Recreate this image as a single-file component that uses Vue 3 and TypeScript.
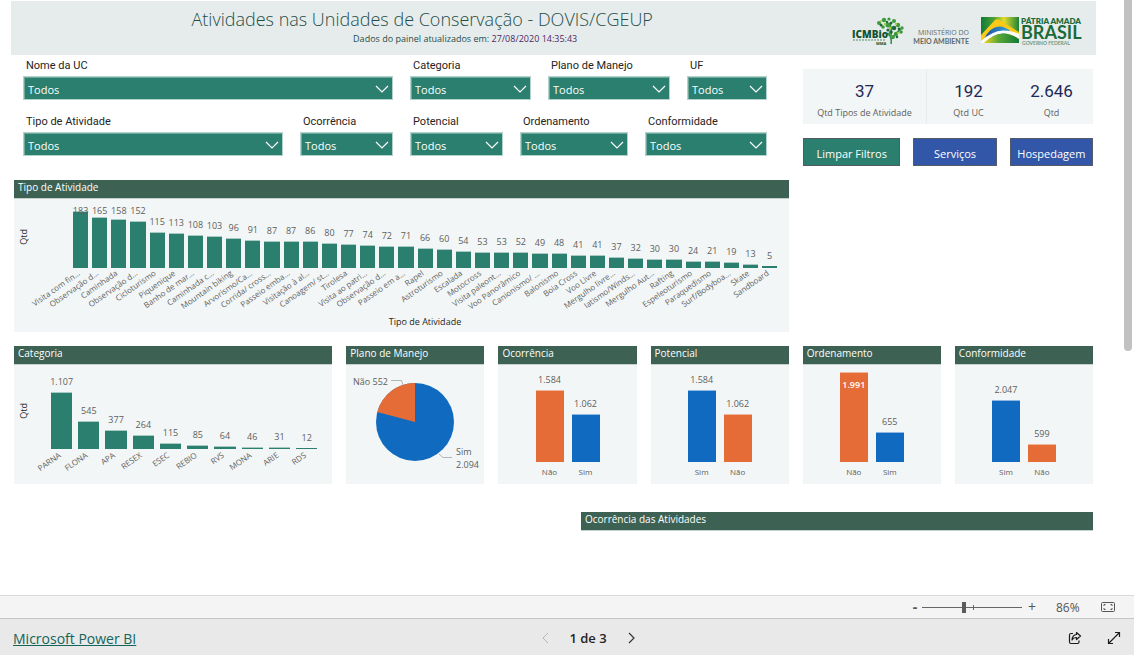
<script setup lang="ts">
import { ref } from 'vue'

interface Filter {
  id: string
  label: string
}
interface Datum {
  name: string
  value: number
  tone?: 'green' | 'orange' | 'blue'
  inside?: boolean
}
interface MiniChart {
  title: string
  scale: number
  data: Datum[]
}

const filtersTop: Filter[] = [
  { id: 'uc', label: 'Nome da UC' },
  { id: 'categoria', label: 'Categoria' },
  { id: 'plano', label: 'Plano de Manejo' },
  { id: 'uf', label: 'UF' },
]
const filtersBottom: Filter[] = [
  { id: 'tipo', label: 'Tipo de Atividade' },
  { id: 'ocorrencia', label: 'Ocorrência' },
  { id: 'potencial', label: 'Potencial' },
  { id: 'ordenamento', label: 'Ordenamento' },
  { id: 'conformidade', label: 'Conformidade' },
]
const filterRows = [
  { name: 'first', items: filtersTop },
  { name: 'second', items: filtersBottom },
]

const kpis = [
  { value: '37', label: 'Qtd Tipos de Atividade' },
  { value: '192', label: 'Qtd UC' },
  { value: '2.646', label: 'Qtd' },
]

const activities: Datum[] = [
  { name: 'Visita com fin…', value: 183 },
  { name: 'Observação d…', value: 165 },
  { name: 'Caminhada', value: 158 },
  { name: 'Observação d…', value: 152 },
  { name: 'Cicloturismo', value: 115 },
  { name: 'Piquenique', value: 113 },
  { name: 'Banho de mar…', value: 108 },
  { name: 'Caminhada c…', value: 103 },
  { name: 'Mountain biking', value: 96 },
  { name: 'Arvorismo/Ca…', value: 91 },
  { name: 'Corrida/ cross…', value: 87 },
  { name: 'Passeio emba…', value: 87 },
  { name: 'Visitação à al…', value: 86 },
  { name: 'Canoagem/ st…', value: 80 },
  { name: 'Tirolesa', value: 77 },
  { name: 'Visita ao patri…', value: 74 },
  { name: 'Observação d…', value: 72 },
  { name: 'Passeio em a…', value: 71 },
  { name: 'Rapel', value: 66 },
  { name: 'Astroturismo', value: 60 },
  { name: 'Escalada', value: 54 },
  { name: 'Motocross', value: 53 },
  { name: 'Visita paleont…', value: 53 },
  { name: 'Voo Panorâmico', value: 52 },
  { name: 'Canionismo/ …', value: 49 },
  { name: 'Balonismo', value: 48 },
  { name: 'Boia Cross', value: 41 },
  { name: 'Voo Livre', value: 41 },
  { name: 'Mergulho livre…', value: 37 },
  { name: 'Iatismo/Winds…', value: 32 },
  { name: 'Mergulho Aut…', value: 30 },
  { name: 'Rafting', value: 30 },
  { name: 'Espeleoturismo', value: 24 },
  { name: 'Paraquedismo', value: 21 },
  { name: 'Surf/Bodyboa…', value: 19 },
  { name: 'Skate', value: 13 },
  { name: 'Sandboard', value: 5 },
]

const categories: Datum[] = [
  { name: 'PARNA', value: 1107 },
  { name: 'FLONA', value: 545 },
  { name: 'APA', value: 377 },
  { name: 'RESEX', value: 264 },
  { name: 'ESEC', value: 115 },
  { name: 'REBIO', value: 85 },
  { name: 'RVS', value: 64 },
  { name: 'MONA', value: 46 },
  { name: 'ARIE', value: 31 },
  { name: 'RDS', value: 12 },
]

const miniCharts: MiniChart[] = [
  {
    title: 'Ocorrência',
    scale: 0.0452,
    data: [
      { name: 'Não', value: 1584, tone: 'orange' },
      { name: 'Sim', value: 1062, tone: 'blue' },
    ],
  },
  {
    title: 'Potencial',
    scale: 0.0452,
    data: [
      { name: 'Sim', value: 1584, tone: 'blue' },
      { name: 'Não', value: 1062, tone: 'orange' },
    ],
  },
  {
    title: 'Ordenamento',
    scale: 0.0452,
    data: [
      { name: 'Não', value: 1991, tone: 'orange', inside: true },
      { name: 'Sim', value: 655, tone: 'blue' },
    ],
  },
  {
    title: 'Conformidade',
    scale: 0.0302,
    data: [
      { name: 'Sim', value: 2047, tone: 'blue' },
      { name: 'Não', value: 599, tone: 'orange' },
    ],
  },
]

const zoom = ref(42)

function format(n: number): string {
  return String(n).replace(/\B(?=(\d{3})+$)/g, '.')
}
function barHeight(value: number, scale: number): string {
  return Math.max(1, Math.round(value * scale)) + 'px'
}
function labelBottom(value: number, scale: number, limit: number): string {
  return Math.min(Math.round(value * scale) + 5, limit) + 'px'
}
</script>

<template>
  <div class="app">
    <div class="viewport">
      <main class="report">
        <header class="banner">
          <div class="heading">
            <h1>Atividades nas Unidades de Conservação - DOVIS/CGEUP</h1>
            <p>Dados do painel atualizados em: <time>27/08/2020 14:35:43</time></p>
          </div>
          <div class="logos">
            <svg width="54" height="30" viewBox="0 0 54 30" role="img" aria-label="ICMBio">
              <path d="M40 28 C41 23 40 20 36 17 M41 23 C43 18 46 16 50 13 M40 20 C41 15 40 11 39 7" fill="none" stroke="#2f8a3c" stroke-width="1.5" />
              <g fill="#3f9a3d">
                <circle cx="28" cy="7" r="2" /><circle cx="33" cy="4" r="2.2" /><circle cx="38" cy="3" r="1.6" />
                <circle cx="43" cy="5" r="2" /><circle cx="47" cy="9" r="2.2" /><circle cx="51" cy="12" r="1.7" />
                <circle cx="37" cy="9" r="2.5" /><circle cx="32" cy="11" r="1.8" /><circle cx="50" cy="16" r="1.8" />
                <circle cx="45" cy="18" r="2.2" /><circle cx="38" cy="18" r="1.6" /><circle cx="42" cy="21" r="2" />
              </g>
              <g fill="#1f6a38">
                <circle cx="30" cy="9" r="1.5" /><circle cx="40" cy="7" r="1.5" /><circle cx="43" cy="12" r="2.3" />
                <circle cx="37" cy="14" r="1.6" /><circle cx="48" cy="13" r="1.4" /><circle cx="40" cy="16" r="1.8" />
                <circle cx="46" cy="21" r="1.3" /><circle cx="36" cy="6" r="1.2" />
              </g>
              <g fill="#a9c838">
                <circle cx="34" cy="8" r="1.2" /><circle cx="45" cy="8" r="1.2" /><circle cx="39" cy="12" r="1.2" />
                <circle cx="47" cy="17" r="1.1" /><circle cx="30" cy="5" r="1" />
              </g>
              <text x="1" y="22" class="icm">ICMBio</text>
              <path d="M2 24H34" stroke="#55906a" stroke-width="1" stroke-dasharray="2 1" />
              <text x="25" y="29" class="icm-sub">MMA</text>
            </svg>
            <p class="ministry">MINISTÉRIO DO<br /><b>MEIO AMBIENTE</b></p>
            <svg width="104" height="32" viewBox="0 0 104 32" role="img" aria-label="Pátria Amada Brasil">
              <defs>
                <linearGradient id="flag" x1="0" x2="1" y1="0" y2="0">
                  <stop offset="0" stop-color="#0f7a37" />
                  <stop offset=".35" stop-color="#4fa233" />
                  <stop offset=".6" stop-color="#e3dd2a" />
                  <stop offset="1" stop-color="#1b8338" />
                </linearGradient>
                <linearGradient id="globe" x1="0" x2="1">
                  <stop offset="0" stop-color="#1d4f9c" />
                  <stop offset="1" stop-color="#33a9e0" />
                </linearGradient>
                <linearGradient id="hill" x1="0" x2="1">
                  <stop offset="0" stop-color="#f3d31c" />
                  <stop offset=".4" stop-color="#5ba935" />
                  <stop offset="1" stop-color="#0f7a37" />
                </linearGradient>
              </defs>
              <rect y="2" width="38" height="26" fill="url(#flag)" />
              <path d="M0 20L14 5Q16 3.500 18.500 5L38 17V28H0Z" fill="#fbc916" />
              <path d="M3 24Q9 12 18 11.500Q25 11.500 30 17L20 20Z" fill="url(#globe)" />
              <path d="M0 26Q11 16 22 15.500Q31 15.500 38 19V24Q30 18.500 22 18.500Q12 19 3 28H0Z" fill="#fafcfa" />
              <path d="M3 28Q12 19 22 18.500Q30 18.500 38 24V28Z" fill="url(#hill)" />
              <text x="40" y="9" class="patria">PÁTRIA AMADA</text>
              <text x="40" y="24" class="brasil">BRASIL</text>
              <text x="41" y="30" class="governo">GOVERNO FEDERAL</text>
            </svg>
          </div>
        </header>

        <div class="top-area">
          <section class="filters" aria-label="Filtros">
            <div v-for="row in filterRows" :key="row.name" class="filter-row" :class="row.name">
              <div v-for="f in row.items" :key="f.id" class="filter">
                <label :for="f.id">{{ f.label }}</label>
                <div class="select-box">
                  <select :id="f.id">
                    <option>Todos</option>
                  </select>
                  <svg class="chevron" width="14" height="8" viewBox="0 0 14 8" aria-hidden="true">
                    <path d="M1 1l6 6 6-6" fill="none" stroke="#fff" stroke-width="1.2" />
                  </svg>
                </div>
              </div>
            </div>
          </section>

          <aside class="summary">
            <dl class="kpis">
              <div v-for="k in kpis" :key="k.label" class="kpi">
                <dd>{{ k.value }}</dd>
                <dt>{{ k.label }}</dt>
              </div>
            </dl>
            <div class="actions">
              <button type="button" class="clear">Limpar Filtros</button>
              <button type="button">Serviços</button>
              <button type="button">Hospedagem</button>
            </div>
          </aside>
        </div>

        <div class="activity-row">
          <section class="panel">
            <h2>Tipo de Atividade</h2>
            <div class="chart wide">
              <span class="y-title">Qtd</span>
              <div class="plot">
                <div v-for="(d, i) in activities" :key="i" class="cell">
                  <div class="bar green" :style="{ height: barHeight(d.value, 0.31) }"></div>
                  <span class="value" :style="{ bottom: labelBottom(d.value, 0.31, 52) }">{{ d.value }}</span>
                  <span class="tick">{{ d.name }}</span>
                </div>
              </div>
              <span class="x-title">Tipo de Atividade</span>
            </div>
          </section>
        </div>

        <div class="panel-row">
          <section class="panel">
            <h2>Categoria</h2>
            <div class="chart category">
              <span class="y-title">Qtd</span>
              <div class="plot">
                <div v-for="d in categories" :key="d.name" class="cell">
                  <div class="bar green" :style="{ height: barHeight(d.value, 0.0515) }"></div>
                  <span class="value" :style="{ bottom: labelBottom(d.value, 0.0515, 90) }">{{ format(d.value) }}</span>
                  <span class="tick">{{ d.name }}</span>
                </div>
              </div>
            </div>
          </section>

          <section class="panel">
            <h2>Plano de Manejo</h2>
            <svg class="pie" width="138" height="119" viewBox="0 0 138 119" role="img" aria-label="Não 552, Sim 2.094">
              <circle cx="69" cy="57" r="39" fill="#0f6ac0" />
              <path d="M69 57 L31.3 46.9 A39 39 0 0 1 69 18Z" fill="#e66c37" />
              <path d="M45 15.500H55.500L57 20M93 89L97 92.500H106" fill="none" stroke="#b3b6b6" />
              <text x="7" y="20">Não 552</text>
              <text x="110" y="90">Sim</text>
              <text x="110" y="103">2.094</text>
            </svg>
          </section>

          <section v-for="c in miniCharts" :key="c.title" class="panel">
            <h2>{{ c.title }}</h2>
            <div class="chart mini">
              <div class="plot">
                <div v-for="d in c.data" :key="d.name" class="cell">
                  <div class="bar" :class="d.tone" :style="{ height: barHeight(d.value, c.scale) }"></div>
                  <span
                    class="value"
                    :class="{ inside: d.inside }"
                    :style="{ bottom: labelBottom(d.value, c.scale, d.inside ? 72 : 90) }"
                  >{{ format(d.value) }}</span>
                  <span class="name">{{ d.name }}</span>
                </div>
              </div>
            </div>
          </section>
        </div>

        <div class="map-row">
          <section class="panel">
            <h2>Ocorrência das Atividades</h2>
          </section>
        </div>
      </main>
      <div class="scroll-track"><div class="scroll-thumb"></div></div>
    </div>

    <div class="zoom-bar">
      <button type="button" class="step minus" aria-label="Reduzir">-</button>
      <div class="slider">
        <input v-model.number="zoom" type="range" min="0" max="100" aria-label="Zoom" />
      </div>
      <button type="button" class="step" aria-label="Ampliar">+</button>
      <span class="percent">86%</span>
      <button type="button" class="fit" aria-label="Ajustar à página">
        <svg width="14" height="10" viewBox="0 0 14 10" fill="none" stroke="#555">
          <rect x=".5" y=".5" width="13" height="9" rx="1" />
          <path d="M3 4V2.500H4.500M9.500 2.500H11V4M11 6V7.500H9.500M4.500 7.500H3V6" />
        </svg>
      </button>
    </div>

    <footer class="nav-bar">
      <a href="#">Microsoft Power BI</a>
      <nav class="pager" aria-label="Páginas">
        <button type="button" aria-label="Anterior" disabled>
          <svg width="8" height="12" viewBox="0 0 8 12" fill="none" stroke="#b5b5b5"><path d="M7 1L2 6l5 5" /></svg>
        </button>
        <span>1 de 3</span>
        <button type="button" aria-label="Próxima">
          <svg width="8" height="12" viewBox="0 0 8 12" fill="none" stroke="#333" stroke-width="1.2"><path d="M2 1l5 5-5 5" /></svg>
        </button>
      </nav>
      <div class="tools">
        <button type="button" aria-label="Compartilhar">
          <svg width="14" height="14" viewBox="0 0 14 14" fill="none" stroke="#1c1c1c" stroke-width="1.2" stroke-linejoin="round">
            <path d="M5 2.500H3Q1.500 2.500 1.500 4V11Q1.500 12.500 3 12.500H9.500Q11 12.500 11 11V9.500" />
            <path d="M8.500 1.500L12.500 5 8.500 8.500V6.500Q5.500 6.300 4 9 4.300 4 8.500 3.500Z" />
          </svg>
        </button>
        <button type="button" aria-label="Tela cheia">
          <svg width="14" height="14" viewBox="0 0 14 14" fill="none" stroke="#1c1c1c" stroke-width="1.2">
            <path d="M1.500 12.500L12.500 1.500M8 1.500H12.500V6M1.500 8V12.500H6" />
          </svg>
        </button>
      </div>
    </footer>
  </div>
</template>

<style>
body {
  margin: 0;
}
</style>

<style scoped>
.app {
  display: flex;
  flex-direction: column;
  height: 100vh;
  background: #fff;
  color: #252423;
  font-family: 'Open Sans', 'Noto Sans', sans-serif;
}
h1,
h2,
p,
dl,
dd {
  margin: 0;
}
button {
  padding: 0;
  border: 0;
  background: none;
  font: inherit;
  color: inherit;
}
.viewport {
  flex: 1;
  min-height: 0;
  display: flex;
  overflow: hidden;
}
.report {
  flex: 1;
  min-width: 0;
  padding: 1px 28px 0 11px;
}
.scroll-track {
  width: 10px;
}
.scroll-thumb {
  width: 8px;
  height: 59%;
  border-radius: 0 0 4px 4px;
  background: #c1c1c1;
}

.banner {
  display: flex;
  align-items: center;
  height: 54px;
  padding-right: 11px;
  background: #e6ecec;
  color: #1f4e4a;
}
.heading {
  flex: 1;
  padding: 0 18px 3px 0;
  text-align: center;
}
h1 {
  font-size: 18px;
  font-weight: 300;
  line-height: 24px;
}
.heading p {
  padding-left: 86px;
  font-size: 9px;
  line-height: 16px;
}
time {
  color: #4b2a63;
}
.logos {
  display: flex;
  align-items: center;
  padding-top: 5px;
}
.icm {
  font: 800 10px 'Open Sans', sans-serif;
  fill: #14532f;
}
.icm-sub {
  font: 700 4px 'Open Sans', sans-serif;
  fill: #14532f;
}
.ministry {
  padding: 14px 12px 0 8px;
  font-family: 'Open Sans', sans-serif;
  font-size: 7px;
  line-height: 8px;
  text-align: right;
  color: #5f6a6a;
}
.ministry b {
  font-family: Lato, sans-serif;
}
.patria {
  font: 800 8px Lato, sans-serif;
  fill: #1b6b3a;
}
.brasil {
  font: 700 18px Lato, sans-serif;
  fill: #1b6b3a;
}
.governo {
  font: 700 5px Lato, sans-serif;
  fill: #6f9a82;
}

.top-area,
.activity-row {
  display: grid;
  grid-template-columns: minmax(0, 1fr) 290px;
  column-gap: 14px;
  margin: 0 3px;
}
.filters {
  display: grid;
  align-content: start;
  gap: 14px;
  padding: 3px 22px 0 9px;
}
.filter-row {
  display: grid;
  column-gap: 17px;
}
.filter-row.first {
  grid-template-columns: 370fr 121fr 122fr 80fr;
}
.filter-row.second {
  grid-template-columns: 260fr 93fr 93fr 108fr 122fr;
}
.filter label {
  display: block;
  padding: 0 0 2px 3px;
  font-family: Roboto, sans-serif;
  font-size: 11px;
  line-height: 16px;
}
.select-box {
  position: relative;
}
.select-box select {
  display: block;
  width: 100%;
  height: 24px;
  padding: 2px 20px 0 4px;
  border: 1px solid #b4d2cc;
  border-radius: 0;
  background: #2a7f6f;
  box-shadow: inset 1px 1px #6fa99e;
  color: #fff;
  font: 11px 'Open Sans', sans-serif;
  appearance: none;
}
.chevron {
  position: absolute;
  right: 4px;
  top: 9px;
  pointer-events: none;
}
.summary {
  padding-top: 14px;
}
.kpis {
  display: grid;
  grid-template-columns: 124fr 83fr 83fr;
  background: #f2f6f7;
  text-align: center;
}
.kpi {
  display: flex;
  flex-direction: column;
  height: 55px;
  box-sizing: border-box;
  padding-top: 11px;
}
.kpi:first-child {
  border-right: 1px solid #e6ecee;
}
.kpi dd {
  font-family: Roboto, sans-serif;
  font-size: 17px;
  line-height: 22px;
  color: #1c2a57;
}
.kpi dt {
  font-size: 9px;
  line-height: 22px;
  color: #605e5c;
}
.actions {
  display: grid;
  grid-template-columns: 97fr 83fr 83fr;
  gap: 13px;
  margin-top: 14px;
}
.actions button {
  height: 28px;
  padding-top: 2px;
  border: 1px solid #555b66;
  background: #3257a8;
  color: #fff;
  font-size: 11px;
}
.actions .clear {
  background: #2a7f6f;
}

.activity-row {
  margin-top: 14px;
}
.panel {
  background: #f2f6f7;
}
.panel h2 {
  height: 18px;
  padding-left: 4px;
  border-bottom: 1px solid #c3d0cc;
  background: #3d6253;
  color: #fff;
  font-size: 10px;
  font-weight: 500;
  line-height: 15px;
}
.chart {
  position: relative;
  font-size: 9px;
  color: #605e5c;
}
.plot {
  display: flex;
  align-items: flex-end;
}
.cell {
  position: relative;
  flex: 1;
  padding: 0 2px;
}
.bar {
  box-sizing: border-box;
  border: solid #a9cbc4;
  border-width: 1px 0 0;
}
.green {
  background: #2a7f6f;
}
.category .cell:last-child .bar,
.wide .cell:last-child .bar {
  border-color: #2a7f6f;
}
.orange {
  background: #e66c37;
  border-color: #f0b79f;
}
.blue {
  background: #0f6ac0;
  border-color: #8fb9e0;
}
.value {
  position: absolute;
  left: 50%;
  transform: translateX(-50%);
  line-height: 11px;
}
.value.inside {
  color: #fff;
  font-weight: 600;
}
.tick {
  position: absolute;
  right: calc(50% + 5px);
  top: 100%;
  line-height: 10px;
  white-space: nowrap;
  font-size: 8px;
  transform: rotate(-35deg);
  transform-origin: 100% 0;
}
.y-title {
  position: absolute;
  left: 4px;
  top: 30px;
  writing-mode: vertical-rl;
  transform: rotate(180deg);
  line-height: 11px;
  color: #252423;
}
.wide {
  height: 133px;
}
.wide .plot {
  height: 69px;
  padding: 0 10px 0 57px;
}
.x-title {
  display: block;
  margin-top: 48px;
  padding-left: 47px;
  line-height: 12px;
  text-align: center;
  color: #252423;
}
.category .plot {
  height: 84px;
  padding: 0 12px 0 34px;
}
.category .y-title {
  top: 38px;
}
.category .cell {
  padding: 0 3px;
}
.category .tick {
  top: calc(100% + 1px);
}
.panel-row {
  display: grid;
  grid-template-columns: 318fr repeat(5, 138fr);
  gap: 14px;
  margin: 14px 3px 0;
}
.mini {
  height: 119px;
}
.mini .plot {
  justify-content: center;
  gap: 8px;
  height: 97px;
}
.mini .cell {
  flex: 0 0 28px;
  padding: 0;
}
.name {
  position: absolute;
  left: 0;
  right: 0;
  top: calc(100% + 4px);
  font-size: 8px;
  line-height: 11px;
  text-align: center;
}
.pie {
  display: block;
  margin: 0 auto;
  font-size: 9px;
  fill: #605e5c;
}
.map-row {
  display: grid;
  grid-template-columns: 567fr 512fr;
  margin: 28px 3px 0;
}
.map-row .panel {
  grid-column: 2;
}

.zoom-bar {
  display: flex;
  align-items: center;
  justify-content: flex-end;
  box-sizing: border-box;
  height: 23px;
  padding-right: 19px;
  border-top: 1px solid #d9d9d9;
  background: #f4f4f4;
  color: #555;
}
.step {
  width: 20px;
  font-size: 14px;
  line-height: 20px;
}
.minus {
  width: 14px;
  font-weight: 700;
}
.slider {
  width: 100px;
  height: 11px;
  display: flex;
  background: linear-gradient(#666, #666) 51px 50% / 1px 5px no-repeat;
}
.slider input {
  width: 100%;
  height: 11px;
  margin: 0;
  background: linear-gradient(#666, #666) 0 50% / 100% 1px no-repeat;
  appearance: none;
}
.slider input::-webkit-slider-thumb {
  appearance: none;
  width: 4px;
  height: 11px;
  background: #5c5c5c;
}
.percent {
  width: 37px;
  margin-left: 14px;
  font-size: 12px;
}
.fit {
  margin-left: 8px;
  line-height: 0;
}
.nav-bar {
  display: grid;
  grid-template-columns: 1fr auto 1fr;
  align-items: center;
  box-sizing: border-box;
  height: 37px;
  padding: 2px 13px 0;
  border-top: 1px solid #c6c6c6;
  background: #e9e9e9;
}
.nav-bar a {
  color: #13645a;
  font-size: 14px;
}
.pager {
  display: flex;
  align-items: center;
  gap: 20px;
  padding-left: 42px;
  font-size: 13px;
  font-weight: 600;
}
.pager button,
.tools button {
  line-height: 0;
}
.tools {
  display: flex;
  justify-content: flex-end;
  gap: 25px;
}
</style>
